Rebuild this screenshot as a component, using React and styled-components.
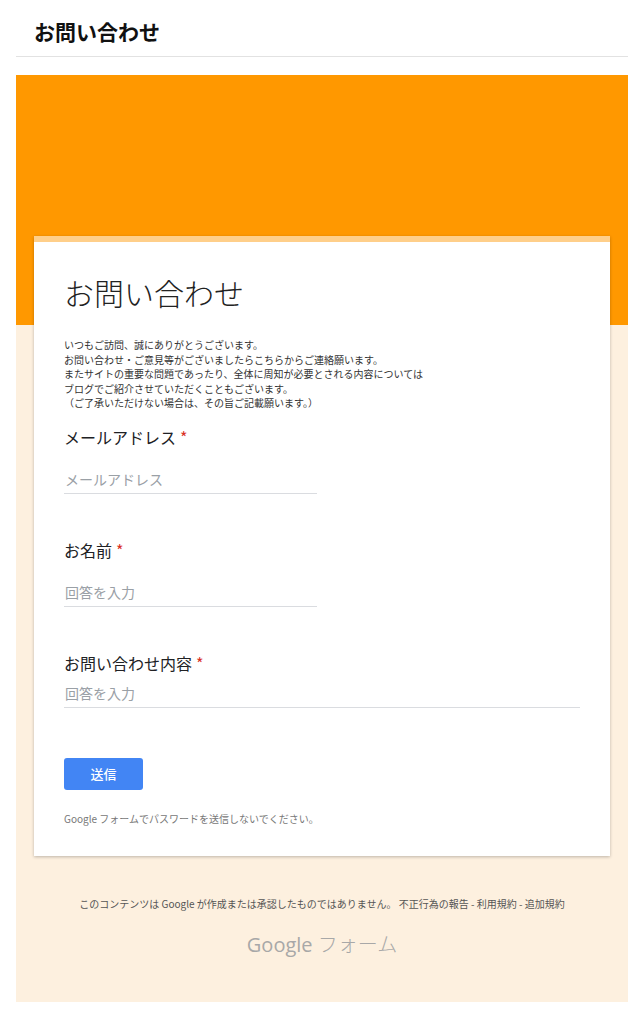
import React from 'react';
import styled, { createGlobalStyle } from 'styled-components';

const GlobalStyle = createGlobalStyle`
  body {
    margin: 0;
    background: #fff;
    font-family: "Noto Sans CJK JP", "Liberation Sans", sans-serif;
  }
`;

const Page = styled.div`
  padding: 0 16px 16px;
`;

const PageHeader = styled.h1`
  margin: 0;
  padding: 16px 18px 10px;
  font-size: 21px;
  font-weight: 700;
  color: #111;
  border-bottom: 1px solid #e2e2e2;
  line-height: 30px;
`;

const FormArea = styled.div`
  margin-top: 18px;
  background: linear-gradient(#ff9800 0, #ff9800 250px, #fdf0df 250px);
  padding: 161px 18px 14px;
`;

const Card = styled.div`
  background: #fff;
  border-top: 6px solid #ffcf8a;
  box-shadow: 0 1px 3px rgba(0, 0, 0, 0.25);
  padding: 26px 30px 30px;
`;

const Title = styled.h2`
  margin: 0 0 22px;
  font-size: 30px;
  font-weight: 300;
  color: #222;
  line-height: 48px;
`;

const Description = styled.p`
  margin: 0 0 14px;
  font-size: 10px;
  line-height: 14.5px;
  color: #333;
  white-space: pre-line;
`;

const Field = styled.div`
  margin-bottom: ${p => p.$mb}px;
`;

const Label = styled.div`
  font-size: 16px;
  color: #202124;
  line-height: 24px;
  margin-bottom: ${p => p.$gap}px;
`;

const Star = styled.span`
  color: #d93025;
  margin-left: 4px;
`;

const Input = styled.input`
  display: block;
  box-sizing: border-box;
  width: ${p => (p.$full ? '100%' : '253px')};
  border: none;
  border-bottom: 1px solid #dadce0;
  padding: 0 0 4px 1px;
  font-family: inherit;
  font-size: 14px;
  line-height: 20px;
  color: #202124;
  outline: none;
  &::placeholder {
    color: #9aa0a6;
  }
`;

const Submit = styled.button`
  margin-top: 50px;
  width: 79px;
  height: 32px;
  background: #4285f4;
  color: #fff;
  border: none;
  border-radius: 3px;
  font-family: inherit;
  font-size: 13px;
  font-weight: 500;
`;

const Note = styled.div`
  margin-top: 21px;
  font-size: 10px;
  color: #777;
`;

const Footer = styled.div`
  text-align: center;
  padding-top: 40px;
`;

const Disclaimer = styled.div`
  font-size: 10px;
  color: #555;
`;

const Brand = styled.div`
  margin-top: 18px;
  margin-bottom: 30px;
  font-family: "Open Sans", "Noto Sans CJK JP", sans-serif;
  font-size: 20px;
  color: #a8a8a8;
  span { font-family: "Noto Sans CJK JP", sans-serif; font-weight: 300; }
`;

const App = () => (
  <Page>
    <GlobalStyle />
    <PageHeader>お問い合わせ</PageHeader>
    <FormArea>
      <Card>
        <Title>お問い合わせ</Title>
        <Description>
          {'いつもご訪問、誠にありがとうございます。\nお問い合わせ・ご意見等がございましたらこちらからご連絡願います。\nまたサイトの重要な問題であったり、全体に周知が必要とされる内容については\nブログでご紹介させていただくこともございます。\n（ご了承いただけない場合は、その旨ご記載願います。）'}
        </Description>
        <Field $mb={44}>
          <Label $gap={20}>メールアドレス<Star>*</Star></Label>
          <Input placeholder="メールアドレス" />
        </Field>
        <Field $mb={44}>
          <Label $gap={20}>お名前<Star>*</Star></Label>
          <Input placeholder="回答を入力" />
        </Field>
        <Field $mb={0}>
          <Label $gap={8}>お問い合わせ内容<Star>*</Star></Label>
          <Input $full placeholder="回答を入力" />
        </Field>
        <Submit>送信</Submit>
        <Note>Google フォームでパスワードを送信しないでください。</Note>
      </Card>
      <Footer>
        <Disclaimer>このコンテンツは Google が作成または承認したものではありません。 不正行為の報告 - 利用規約 - 追加規約</Disclaimer>
        <Brand>Google <span>フォーム</span></Brand>
      </Footer>
    </FormArea>
  </Page>
);

export default App;
